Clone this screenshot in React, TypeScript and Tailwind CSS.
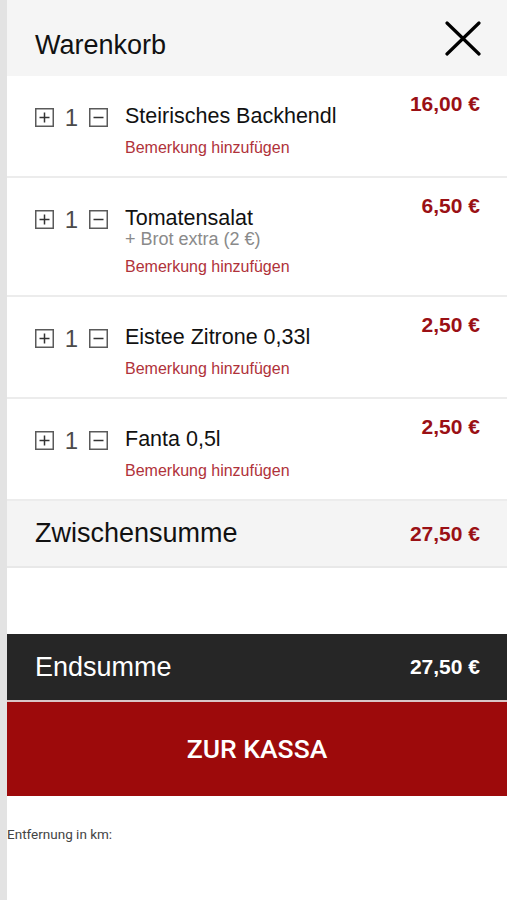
import React from 'react';

interface CartItem {
  name: string;
  extra?: string;
  qty: number;
  price: string;
}

const items: CartItem[] = [
  { name: 'Steirisches Backhendl', qty: 1, price: '16,00 €' },
  { name: 'Tomatensalat', extra: '+ Brot extra (2 €)', qty: 1, price: '6,50 €' },
  { name: 'Eistee Zitrone 0,33l', qty: 1, price: '2,50 €' },
  { name: 'Fanta 0,5l', qty: 1, price: '2,50 €' },
];

function QtyBox({ plus }: { plus?: boolean }) {
  return (
    <svg width="19" height="19" viewBox="0 0 19 19" className="mt-[4px] shrink-0">
      <rect x="0.75" y="0.75" width="17.5" height="17.5" fill="none" stroke="#5a5a5a" strokeWidth="1.5" />
      <line x1="4.5" y1="9.5" x2="14.5" y2="9.5" stroke="#333" strokeWidth="1.5" />
      {plus && <line x1="9.5" y1="4.5" x2="9.5" y2="14.5" stroke="#333" strokeWidth="1.5" />}
    </svg>
  );
}

export default function App() {
  return (
    <div className="flex min-h-[900px] bg-white" style={{ fontFamily: '"Liberation Sans", Arial, sans-serif' }}>
      {/* left strip */}
      <div className="w-[7px] shrink-0 bg-[#e3e3e3]" />

      <div className="flex-1 flex flex-col">
        {/* Header */}
        <div className="h-[76px] bg-[#f5f5f5] flex items-start justify-between pl-[28px] pr-[26px]">
          <h1 className="mt-[29px] text-[27px] leading-[32px] text-[#111]">Warenkorb</h1>
          <svg width="36" height="35" viewBox="0 0 36 35" className="mt-[21px]">
            <line x1="2" y1="2" x2="34" y2="33" stroke="#000" strokeWidth="3.2" strokeLinecap="round" />
            <line x1="34" y1="2" x2="2" y2="33" stroke="#000" strokeWidth="3.2" strokeLinecap="round" />
          </svg>
        </div>

        {/* Items */}
        {items.map((item, idx) => (
          <div key={idx} className="flex justify-between border-b-2 border-[#ececec] pl-[28px] pr-[27px]">
            <div className="flex pt-[28px] pb-[18px]">
              <div className="flex items-start h-[24px]">
                <QtyBox plus />
                <span className="w-[35px] text-center text-[24px] leading-[27px] text-[#4a4a4a]">{item.qty}</span>
                <QtyBox />
              </div>
              <div className="ml-[17px] flex flex-col">
                <span className="text-[21.5px] leading-[24px] text-[#111]">{item.name}</span>
                {item.extra && (
                  <span className="text-[18px] leading-[18px] text-[#8a8a8a]">{item.extra}</span>
                )}
                <span className={`${item.extra ? 'mt-[9px]' : 'mt-[10px]'} text-[16px] leading-[20px] text-[#b0323a]`}>
                  Bemerkung hinzufügen
                </span>
              </div>
            </div>
            <span className="pt-[18px] text-[21px] leading-[20px] font-bold text-[#9a1015]">{item.price}</span>
          </div>
        ))}

        {/* Zwischensumme */}
        <div className="h-[67px] bg-[#f4f4f4] border-b-2 border-[#e8e8e8] flex items-center justify-between pl-[28px] pr-[27px]">
          <span className="text-[27px] text-[#111]">Zwischensumme</span>
          <span className="text-[21px] font-bold text-[#9a1015]">27,50 €</span>
        </div>

        <div className="h-[66px]" />

        {/* Endsumme */}
        <div className="h-[68px] bg-[#262626] flex items-center justify-between pl-[28px] pr-[27px] border-b-2 border-[#d9c6c6]">
          <span className="text-[27px] text-white">Endsumme</span>
          <span className="text-[21px] font-bold text-white">27,50 €</span>
        </div>

        {/* Zur Kassa */}
        <button
          className="h-[94px] bg-[#9d0a0b] flex items-center justify-center text-white text-[26.5px] font-medium"
          style={{ fontFamily: 'Roboto, "Liberation Sans", sans-serif' }}
        >
          ZUR KASSA
        </button>

        <p
          className="mt-[28px] text-[13.5px] leading-[20px] text-[#444]"
          style={{ fontFamily: 'Roboto, "Liberation Sans", sans-serif' }}
        >
          Entfernung in km:
        </p>
      </div>
    </div>
  );
}
